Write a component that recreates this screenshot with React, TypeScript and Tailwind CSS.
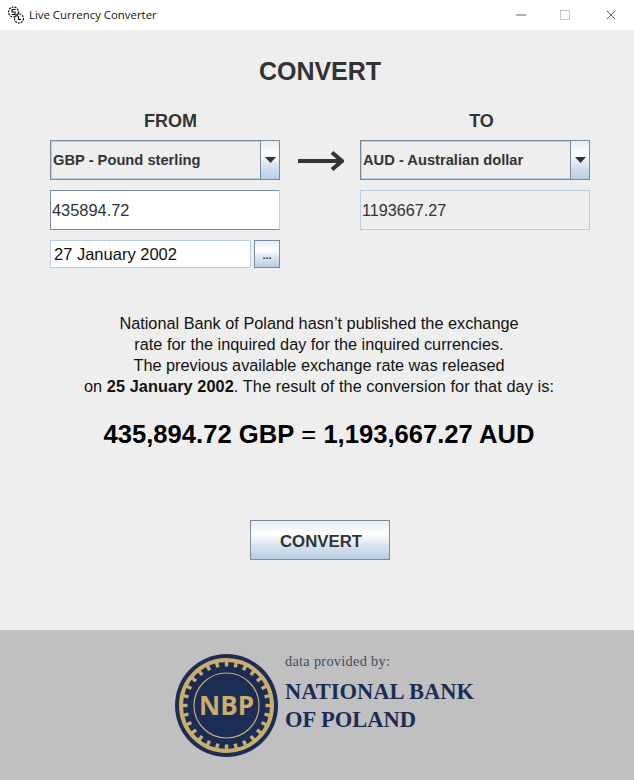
import { Minus, X } from "lucide-react"

const sans = "font-['Liberation_Sans',Arial,sans-serif]"
const gloss = "bg-[linear-gradient(to_bottom,#e3ebf3_0%,#ffffff_35%,#d8e3ef_65%,#b8cfe5_100%)]"

function Combo({ label }: { label: string }) {
    return (
        <div className="flex h-10 w-[230px] border border-[#7a8a99]">
            <div className="flex flex-1 items-center border border-[#b8cfe5] border-r-0 pl-[1px] text-[14.7px] font-bold text-[#333333]">
                {label}
            </div>
            <div className={`flex w-[19px] items-center justify-center border-l border-[#7a8a99] ${gloss}`}>
                <svg width="11" height="6" viewBox="0 0 11 6">
                    <path d="M0 0h11L5.5 6z" fill="#333333" />
                </svg>
            </div>
        </div>
    )
}

function Logo() {
    const teeth = Array.from({ length: 28 }, (_, i) => (i * 360) / 28)
    return (
        <svg width="103" height="103" viewBox="0 0 103 103" className="shrink-0">
            <circle cx="51.5" cy="51.5" r="51.5" fill="#1b2d54" />
            <circle cx="51.5" cy="51.5" r="45.5" fill="none" stroke="#c9ae6c" strokeWidth="4" />
            {teeth.map((a) => (
                <rect key={a} x="49.8" y="6" width="3.4" height="6.5" fill="#c9ae6c" transform={`rotate(${a} 51.5 51.5)`} />
            ))}
            <circle cx="51.5" cy="51.5" r="32.5" fill="none" stroke="#c9ae6c" strokeWidth="1.2" />
            <text
                x="51.5"
                y="60.5"
                textAnchor="middle"
                fontFamily="'Open Sans', sans-serif"
                fontWeight="700"
                fontSize="26"
                fill="#c9ae6c"
            >
                NBP
            </text>
        </svg>
    )
}

export default function App() {
    return (
        <div className={`flex h-[780px] w-[634px] flex-col overflow-hidden bg-[#eeeeee] ${sans}`}>
            <header className="flex h-[30px] shrink-0 items-center bg-white">
                <svg width="16" height="18" viewBox="0 0 16 18" className="ml-[8px]" fill="none" stroke="#111111" strokeWidth="1.2">
                    <circle cx="5.5" cy="6" r="5" strokeDasharray="2 1" />
                    <circle cx="11" cy="12.5" r="4.5" strokeDasharray="2 1" />
                    <path d="M7.5 3.5H4v2.5h3v2.5H3.5M10.5 10v3.5h2.5" />
                </svg>
                <span className="ml-[5px] font-['Open_Sans',sans-serif] text-[11.4px] text-[#111111]">Live Currency Converter</span>
                <div className="ml-auto flex items-center">
                    <Minus size={16} strokeWidth={1} className="mr-[31px] text-[#111111]" />
                    <div className="mr-[33px] h-[10px] w-[10px] border border-[#c4c4c4]" />
                    <X size={16} strokeWidth={1} className="mr-[15px] text-[#111111]" />
                </div>
            </header>

            <main className="flex h-[600px] shrink-0 flex-col items-center pt-[26px] pl-[6px] text-[#333333]">
                <h1 className="h-[30px] text-[25px] leading-[30px] font-bold">CONVERT</h1>

                <div className="mt-[24px] flex w-[540px] justify-between">
                    <section className="flex w-[230px] flex-col">
                        <h2 className="h-[30px] pl-[11px] text-center text-lg leading-[23px] font-bold">FROM</h2>
                        <Combo label="GBP - Pound sterling" />
                        <div className="mt-[10px] flex h-10 items-center border border-t-[#7a8a99] border-l-[#7a8a99] border-r-[#b8cfe5] border-b-[#7a8a99] bg-white pl-[1px] text-[16.4px] text-[#333333]">
                            435894.72
                        </div>
                        <div className="mt-[10px] flex h-[28px] justify-between">
                            <div className="flex w-[201px] items-center border border-[#b8cfe5] bg-white pl-[3px] text-[16.5px] text-[#111111]">
                                27 January 2002
                            </div>
                            <div className={`flex w-[26px] items-center justify-center border border-[#7a8a99] pt-[3px] text-[11px] font-bold ${gloss}`}>
                                ...
                            </div>
                        </div>
                    </section>

                    <div className="mt-[36px] ml-[2px] flex h-[30px] items-center self-start">
                        <svg width="46" height="20" viewBox="0 0 46 20">
                            <path d="M0 10h43" stroke="#333333" strokeWidth="4" />
                            <path d="M34 1.5 44 10 34 18.5" fill="none" stroke="#333333" strokeWidth="4" />
                        </svg>
                    </div>

                    <section className="flex w-[230px] flex-col">
                        <h2 className="h-[30px] pl-[13px] text-center text-lg leading-[23px] font-bold">TO</h2>
                        <Combo label="AUD - Australian dollar" />
                        <div className="mt-[10px] flex h-10 items-center border border-[#b8cfe5] pl-[1px] text-[16.2px] text-[#333333]">
                            1193667.27
                        </div>
                    </section>
                </div>

                <div className="mt-[45px] pr-[2px] text-center text-[16.3px] leading-[21px] text-[#111111]">
                    <p>National Bank of Poland hasn’t published the exchange</p>
                    <p>rate for the inquired day for the inquired currencies.</p>
                    <p>The previous available exchange rate was released</p>
                    <p className="tracking-[0.08px]">
                        on <b>25 January 2002</b>. The result of the conversion for that day is:
                    </p>
                </div>

                <p className="mt-[22px] pr-[2px] text-[25.6px] leading-[30px] text-black">
                    <b>435,894.72 GBP</b> = <b>1,193,667.27 AUD</b>
                </p>

                <button className={`mt-[71px] h-10 w-[140px] border border-[#7a8a99] pt-[3px] pl-[2px] text-[16.8px] font-bold text-[#333333] ${gloss}`}>
                    CONVERT
                </button>
            </main>

            <footer className="flex flex-1 items-center justify-center gap-[7px] bg-[#c0c0c0] pl-[15px] text-[#1b2d54]">
                <Logo />
                <div className="flex h-[103px] flex-col font-['Liberation_Serif',serif]">
                    <p className="text-[14.3px] leading-[14px] tracking-[0.3px] text-[#3d4b6b]">data provided by:</p>
                    <p className="mt-[10px] text-[22.5px] leading-[28px] font-bold">NATIONAL BANK</p>
                    <p className="text-[22.5px] leading-[28px] font-bold">OF POLAND</p>
                </div>
            </footer>
        </div>
    )
}
